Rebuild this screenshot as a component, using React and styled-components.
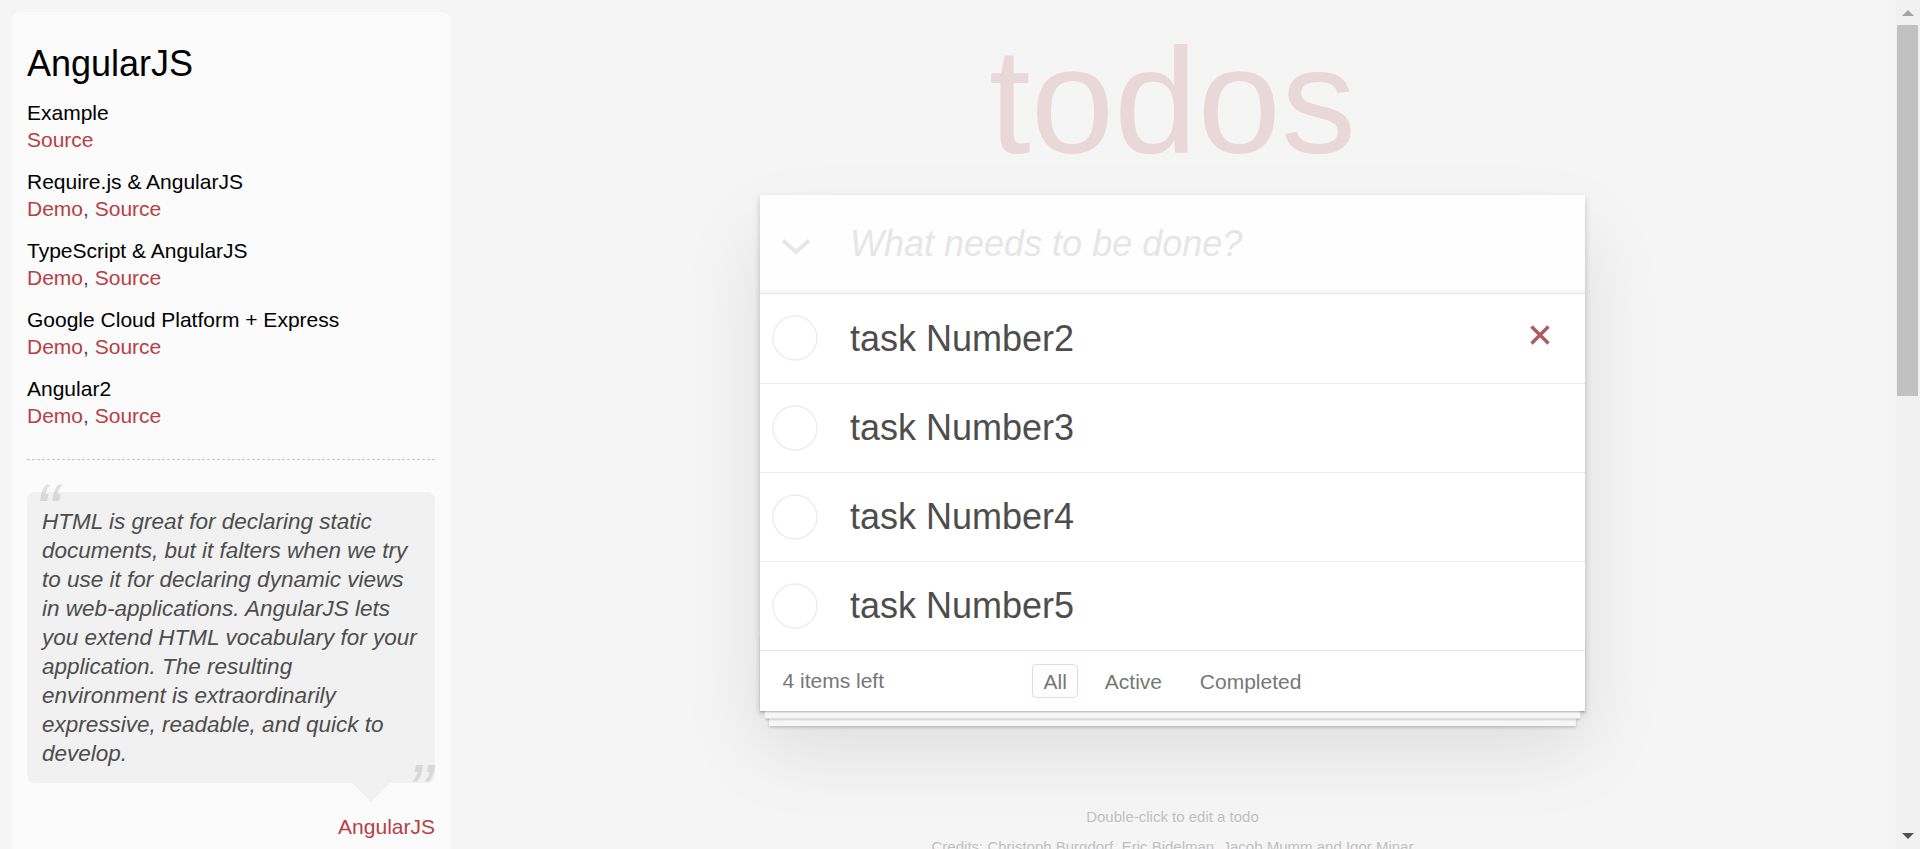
import React from 'react';
import styled, { createGlobalStyle } from 'styled-components';

const GlobalStyle = createGlobalStyle`
  html {
    background: #f5f5f5;
  }

  body {
    margin: 0;
    padding: 0;
    background: #f5f5f5;
    color: #4d4d4d;
    font: 300 21px/1.4em 'Liberation Sans', Arial, sans-serif;
  }
`;

const Page = styled.div`
  display: flex;
  align-items: flex-start;
  margin-right: 25px;
`;

/* ---------- window scrollbar (the reference shows the browser's) ---------- */

const ScrollBar = styled.div`
  position: fixed;
  top: 0;
  right: 0;
  z-index: 10;
  display: flex;
  flex-direction: column;
  width: 25px;
  height: 100vh;
  background: #f1f1f1;
`;

const ScrollButton = styled.div`
  flex-shrink: 0;
  display: flex;
  justify-content: center;
  align-items: flex-start;
  height: 25px;
  padding-top: ${({ $down }) => ($down ? '9px' : '10px')};
  box-sizing: border-box;
`;

const ScrollThumb = styled.div`
  flex-shrink: 0;
  height: 371px;
  margin: 0 2px;
  background: #c1c1c1;
`;

const ScrollSpace = styled.div`
  flex: 1;
`;

/* ---------- learn sidebar ---------- */

const Sidebar = styled.aside`
  flex-shrink: 0;
  width: 408px;
  margin: 12px 0 0 12px;
  padding: 15px;
  border-radius: 7.5px;
  background-color: rgba(255, 255, 255, 0.6);
`;

const SideTitle = styled.h3`
  margin: 15px 0;
  font-size: 36px;
  font-weight: 500;
  line-height: 1.2;
  color: #000;
`;

const ExampleName = styled.h5`
  margin: 14.4px 0 0;
  font-size: 21px;
  font-weight: 500;
  line-height: 1.2;
  color: #000;
`;

const Link = styled.a`
  font-weight: normal;
  text-decoration: none;
  color: #b83f45;
`;

const Divider = styled.hr`
  margin: ${({ $top }) => $top ?? 30}px 0 30px;
  border: 0;
  border-top: 1px dashed #c5c5c5;
  border-bottom: 1px dashed #f7f7f7;
`;

const QuoteBlock = styled.blockquote`
  margin: 31px 0 32px;
`;

const Bubble = styled.div`
  position: relative;
  padding: 15px;
  border-radius: 7.5px;
  background: rgba(0, 0, 0, 0.04);

  &::after {
    content: '';
    position: absolute;
    top: 100%;
    right: 45px;
    border: 19.5px solid transparent;
    border-top-color: rgba(0, 0, 0, 0.04);
  }
`;

const QuoteText = styled.p`
  margin: 0;
  font-size: 22.5px;
  font-weight: 300;
  font-style: italic;
  line-height: 29px;

  &::before,
  &::after {
    position: absolute;
    font-size: 75px;
    line-height: 97.5px;
    opacity: 0.15;
  }

  &::before {
    content: '\\201C';
    top: -30px;
    left: 7.5px;
  }

  &::after {
    content: '\\201D';
    bottom: -57px;
    right: 2.5px;
  }
`;

const Attribution = styled.footer`
  margin-top: 29px;
  text-align: right;
`;

const SectionTitle = styled.h4`
  margin: 15px 0;
  font-size: 27px;
  font-weight: 500;
  line-height: 1.2;
  color: #000;
`;

const ResourceList = styled.ul`
  margin: 0 0 45px 37.5px;
  padding: 0;

  li {
    line-height: 30px;
  }
`;

const SideNote = styled.em`
  display: block;
`;

/* ---------- todo app ---------- */

const Main = styled.main`
  flex: 1;
  min-width: 0;
`;

const Container = styled.div`
  max-width: 825px;
  margin: 0 auto;
`;

const Title = styled.h1`
  margin: 26px 0 19px;
  font-size: 150px;
  font-weight: 100;
  line-height: 150px;
  text-align: center;
  color: rgba(175, 47, 47, 0.15);
  text-rendering: optimizeLegibility;
`;

const TodoApp = styled.section`
  position: relative;
  margin: 0 0 60px;
  background: #fff;
  box-shadow: 0 3px 6px 0 rgba(0, 0, 0, 0.2), 0 37.5px 75px 0 rgba(0, 0, 0, 0.1);
`;

const NewTodoBar = styled.header`
  display: flex;
  align-items: center;
  background: rgba(0, 0, 0, 0.003);
  box-shadow: inset 0 -3px 1.5px rgba(0, 0, 0, 0.03);
`;

const ToggleAll = styled.span`
  flex-shrink: 0;
  display: flex;
  justify-content: center;
  width: 72px;
  padding-top: 4px;
`;

const NewTodoInput = styled.input`
  flex: 1;
  min-width: 0;
  box-sizing: border-box;
  height: 98.4px;
  margin: 0;
  padding: 24px 24px 24px 18px;
  border: none;
  outline: none;
  background: transparent;
  font-family: inherit;
  font-size: 36px;
  font-weight: inherit;
  line-height: 1.4em;
  color: inherit;

  &::placeholder {
    font-style: italic;
    font-weight: 300;
    color: #e6e6e6;
  }
`;

const TodoList = styled.ul`
  position: relative;
  z-index: 2;
  margin: 0;
  padding: 0;
  list-style: none;
  border-top: 1px solid #e6e6e6;
`;

const TodoItem = styled.li`
  display: flex;
  align-items: center;
  font-size: 36px;
  border-bottom: 1px solid #ededed;

  &:last-child {
    border-bottom: none;
  }
`;

const Toggle = styled.span`
  flex-shrink: 0;
  display: flex;
  justify-content: center;
  width: 69px;
`;

const TodoLabel = styled.label`
  flex: 1;
  display: block;
  padding: 22.5px 22.5px 22.5px 21px;
  line-height: 1.2;
  word-break: break-all;
`;

const DestroyButton = styled.button`
  flex-shrink: 0;
  display: flex;
  justify-content: center;
  align-items: center;
  width: 60px;
  height: 60px;
  margin: 0 15px 6px 0;
  padding: 0;
  border: 0;
  background: none;
  cursor: pointer;
  visibility: ${({ $visible }) => ($visible ? 'visible' : 'hidden')};
`;

const Footer = styled.footer`
  position: relative;
  display: grid;
  grid-template-columns: 1fr auto 1fr;
  height: 30px;
  padding: 15px 22.5px;
  border-top: 1px solid #e6e6e6;
  color: #777;

  &::before {
    content: '';
    position: absolute;
    right: 0;
    bottom: 0;
    left: 0;
    height: 75px;
    overflow: hidden;
    box-shadow: 0 1.5px 1.5px rgba(0, 0, 0, 0.2), 0 12px 0 -4.5px #f6f6f6,
      0 13.5px 1.5px -4.5px rgba(0, 0, 0, 0.2), 0 24px 0 -9px #f6f6f6,
      0 25.5px 3px -9px rgba(0, 0, 0, 0.2);
  }
`;

const TodoCount = styled.span`
  text-align: left;
`;

const Filters = styled.ul`
  margin: 0;
  padding: 0;
  list-style: none;
  white-space: nowrap;
`;

const FilterItem = styled.li`
  display: inline;
`;

const FilterLink = styled.a`
  margin: 4.5px;
  padding: 4.5px 10.5px;
  border: 1px solid ${({ $selected }) => ($selected ? 'rgba(175, 47, 47, 0.2)' : 'transparent')};
  border-radius: 4.5px;
  color: inherit;
  text-decoration: none;
`;

const Info = styled.footer`
  margin: 97.5px auto 0;
  font-size: 15px;
  color: #bfbfbf;
  text-align: center;
  text-shadow: 0 1.5px 0 rgba(255, 255, 255, 0.5);

  p {
    margin: 15px 0;
    line-height: 1;
  }

  a {
    font-weight: 400;
    color: inherit;
    text-decoration: none;
  }
`;

const Chevron = () => (
  <svg width="30" height="17" viewBox="0 0 30 17" fill="none">
    <path d="M2 2.5 L15 14 L28 2.5" stroke="#e6e6e6" strokeWidth="3.8" />
  </svg>
);

const Circle = () => (
  <svg width="46" height="46" viewBox="0 0 46 46">
    <circle cx="23" cy="23" r="22" fill="none" stroke="#ededed" strokeWidth="1.4" />
  </svg>
);

const Cross = () => (
  <svg width="22" height="20" viewBox="0 0 22 20">
    <path d="M2.5 1.5 L19.5 18.5 M19.5 1.5 L2.5 18.5" stroke="#af5b5e" strokeWidth="3.4" />
  </svg>
);

const ArrowUp = () => (
  <svg width="12" height="6" viewBox="0 0 12 6">
    <path d="M0 6 L6 0 L12 6 Z" fill="#a3a3a3" />
  </svg>
);

const ArrowDown = () => (
  <svg width="12" height="6" viewBox="0 0 12 6">
    <path d="M0 0 L12 0 L6 6 Z" fill="#505050" />
  </svg>
);

const examples = [
  { name: 'Example', links: ['Source'] },
  { name: 'Require.js & AngularJS', links: ['Demo', 'Source'] },
  { name: 'TypeScript & AngularJS', links: ['Demo', 'Source'] },
  { name: 'Google Cloud Platform + Express', links: ['Demo', 'Source'] },
  { name: 'Angular2', links: ['Demo', 'Source'] },
];

const resources = [
  {
    title: 'Official Resources',
    items: [
      'Tutorial',
      'API Reference',
      'Developer Guide',
      'FAQ',
      'Applications built with AngularJS',
      'Blog',
    ],
  },
  {
    title: 'Articles and Guides',
    items: [
      'Code School AngularJS course',
      '5 Awesome AngularJS Features',
      'Using Yeoman with AngularJS',
      'me&ngular - an introduction to MVW',
    ],
  },
  {
    title: 'Community',
    items: [
      'Walkthroughs and Tutorials on YouTube',
      'Google Groups mailing list',
      'angularjs on Stack Overflow',
      'AngularJS on Twitter',
      'AngularjS on Google+',
    ],
  },
];

const todos = [
  { id: 2, title: 'task Number2' },
  { id: 3, title: 'task Number3' },
  { id: 4, title: 'task Number4' },
  { id: 5, title: 'task Number5' },
];

const filters = ['All', 'Active', 'Completed'];

const App = () => (
  <>
    <GlobalStyle />
    <Page>
      <Sidebar>
        <SideTitle>AngularJS</SideTitle>
        {examples.map((example) => (
          <div key={example.name}>
            <ExampleName>{example.name}</ExampleName>
            {example.links.map((link, i) => (
              <React.Fragment key={link}>
                {i > 0 ? ', ' : null}
                <Link href="#">{link}</Link>
              </React.Fragment>
            ))}
          </div>
        ))}
        <Divider $top={28} />
        <QuoteBlock>
          <Bubble>
            <QuoteText>
              HTML is great for declaring static documents, but it falters when we try to use it
              for declaring dynamic views in web-applications. AngularJS lets you extend HTML
              vocabulary for your application. The resulting environment is extraordinarily
              expressive, readable, and quick to develop.
            </QuoteText>
          </Bubble>
          <Attribution>
            <Link href="#">AngularJS</Link>
          </Attribution>
        </QuoteBlock>
        <Divider />
        {resources.map((section) => (
          <React.Fragment key={section.title}>
            <SectionTitle>{section.title}</SectionTitle>
            <ResourceList>
              {section.items.map((item) => (
                <li key={item}>
                  <Link href="#">{item}</Link>
                </li>
              ))}
            </ResourceList>
          </React.Fragment>
        ))}
        <Divider />
        <SideNote>
          If you have other helpful links to share, or find any of the links above no longer
          work, please <Link href="#">let us know</Link>.
        </SideNote>
      </Sidebar>

      <Main>
        <Container>
          <Title>todos</Title>
          <TodoApp>
            <NewTodoBar>
              <ToggleAll>
                <Chevron />
              </ToggleAll>
              <NewTodoInput placeholder="What needs to be done?" />
            </NewTodoBar>
            <TodoList>
              {todos.map((todo, i) => (
                <TodoItem key={todo.id}>
                  <Toggle>
                    <Circle />
                  </Toggle>
                  <TodoLabel>{todo.title}</TodoLabel>
                  <DestroyButton $visible={i === 0} aria-label="Delete">
                    <Cross />
                  </DestroyButton>
                </TodoItem>
              ))}
            </TodoList>
            <Footer>
              <TodoCount>4 items left</TodoCount>
              <Filters>
                {filters.map((filter, i) => (
                  <React.Fragment key={filter}>
                    {i > 0 ? ' ' : null}
                    <FilterItem>
                      <FilterLink href="#" $selected={i === 0}>
                        {filter}
                      </FilterLink>
                    </FilterItem>
                  </React.Fragment>
                ))}
              </Filters>
              <span />
            </Footer>
          </TodoApp>
          <Info>
            <p>Double-click to edit a todo</p>
            <p>
              Credits: <a href="#">Christoph Burgdorf</a>, <a href="#">Eric Bidelman</a>,{' '}
              <a href="#">Jacob Mumm</a> and <a href="#">Igor Minar</a>
            </p>
            <p>
              Part of <a href="#">TodoMVC</a>
            </p>
          </Info>
        </Container>
      </Main>
    </Page>
    <ScrollBar aria-hidden="true">
      <ScrollButton>
        <ArrowUp />
      </ScrollButton>
      <ScrollThumb />
      <ScrollSpace />
      <ScrollButton $down>
        <ArrowDown />
      </ScrollButton>
    </ScrollBar>
  </>
);

export default App;
